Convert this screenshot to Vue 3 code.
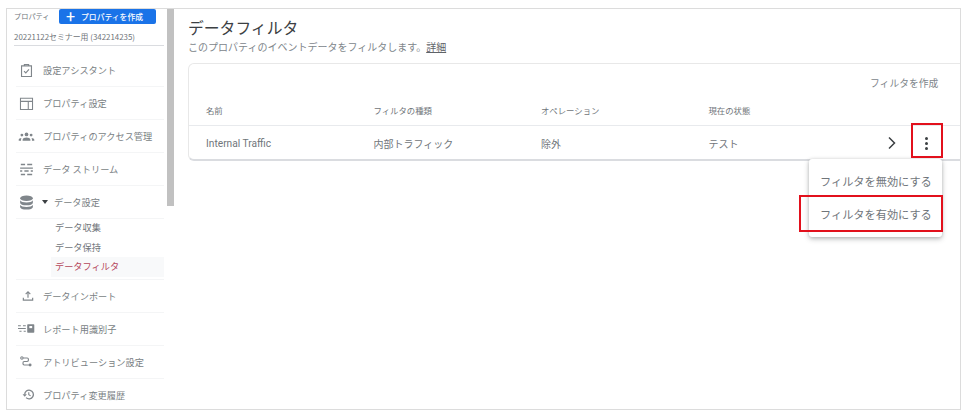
<template>
  <div class="page">
    <div class="frame">
      <aside class="sidebar">
        <div class="prop-head">
          <span class="prop-label">プロパティ</span>
          <button class="create-btn"><span class="plus">+</span>プロパティを作成</button>
        </div>
        <div class="prop-name">20221122セミナー用 (342214235)</div>
        <nav class="nav">
          <div v-for="item in navTop" :key="item.label" class="nav-row">
            <svg class="nav-icon" viewBox="0 0 24 24" v-html="item.icon"></svg>
            <span>{{ item.label }}</span>
          </div>
          <div class="nav-row">
            <svg class="nav-icon db" viewBox="0 0 24 24"><ellipse cx="12" cy="6" rx="9" ry="4" fill="#80868b"/><path d="M3 8.800c1 2 4.500 3.200 9 3.200s8-1.200 9-3.200v3.400c0 2.200-4 3.800-9 3.800s-9-1.600-9-3.800z" fill="#80868b"/><path d="M3 15c1 2 4.500 3.200 9 3.200s8-1.200 9-3.200v3.200c0 2.200-4 3.800-9 3.800s-9-1.600-9-3.800z" fill="#80868b"/></svg>
            <span class="caret"></span>
            <span>データ設定</span>
          </div>
          <div class="sub-list">
            <div class="sub-item">データ収集</div>
            <div class="sub-item">データ保持</div>
            <div class="sub-item active">データフィルタ</div>
          </div>
          <div v-for="item in navBottom" :key="item.label" class="nav-row">
            <svg class="nav-icon" :class="item.cls" viewBox="0 0 24 24" v-html="item.icon"></svg>
            <span>{{ item.label }}</span>
          </div>
        </nav>
      </aside>
      <div class="scrollbar"></div>
      <main class="main">
        <h1 class="title">データフィルタ</h1>
        <p class="desc">このプロパティのイベントデータをフィルタします。<a class="more">詳細</a></p>
        <section class="card">
          <div class="card-top">フィルタを作成</div>
          <div class="table-row head">
            <span v-for="col in columns" :key="col">{{ col }}</span>
          </div>
          <div class="table-row body">
            <span class="latin">Internal Traffic</span>
            <span>内部トラフィック</span>
            <span>除外</span>
            <span>テスト</span>
            <div class="actions">
              <svg class="chevron" viewBox="0 0 10 14"><path d="M2 1.500 7.500 7 2 12.500" fill="none" stroke="#3c4043" stroke-width="1.500"/></svg>
              <div class="kebab"><i></i><i></i><i></i></div>
            </div>
          </div>
        </section>
        <div class="menu">
          <div class="menu-item">フィルタを無効にする</div>
          <div class="menu-item">フィルタを有効にする</div>
        </div>
        <div class="mark mark-kebab"></div>
        <div class="mark mark-item"></div>
      </main>
    </div>
  </div>
</template>

<script setup>
const navTop = [
  { label: '設定アシスタント', icon: '<path d="M5 5.500h14v15H5z M9 5.500V3.500h6v2" fill="none" stroke="#80868b" stroke-width="1.600"/><path d="m8.500 13 2.500 2.500 4.500-5" fill="none" stroke="#80868b" stroke-width="1.600"/>' },
  { label: 'プロパティ設定', icon: '<path d="M3.500 4.500h17v16h-17z M3.500 9h17 M14.500 9v11.500" fill="none" stroke="#80868b" stroke-width="1.500"/>' },
  { label: 'プロパティのアクセス管理', icon: '<circle cx="12" cy="9" r="2.600" fill="#80868b"/><circle cx="5.500" cy="10" r="2" fill="#80868b"/><circle cx="18.500" cy="10" r="2" fill="#80868b"/><path d="M6.500 18v-1.500c0-2 3-3.200 5.500-3.200s5.500 1.200 5.500 3.200V18zM1 18v-1.500c0-1.500 2-2.500 4-2.500-.5.700-.7 1.500-.7 2.500V18zM23 18v-1.500c0-1.500-2-2.500-4-2.500 .5.700.7 1.500.7 2.500V18z" fill="#80868b"/>' },
  { label: 'データ ストリーム', icon: '<path d="M4 5h6M13 5h7M3 10h18M3 14h3M9 14h6M18 14h3M4 19h6M13 19h7" fill="none" stroke="#80868b" stroke-width="2"/>' }
]

const navBottom = [
  { label: 'データインポート', cls: 'up', icon: '<path d="M12 16V6M8 9.500 12 5.500l4 4M4 16v4h16v-4" fill="none" stroke="#80868b" stroke-width="2"/>' },
  { label: 'レポート用識別子', icon: '<rect x="13" y="6" width="10" height="12" rx="1" fill="#80868b"/><rect x="16" y="8.500" width="4" height="3" fill="#fff"/><path d="M0 8h4M7 8h4M0 12h11M2 16h3M8 16h3" stroke="#80868b" stroke-width="1.500"/>' },
  { label: 'アトリビューション設定', cls: 'attr', icon: '<circle cx="5" cy="6" r="2" fill="none" stroke="#80868b" stroke-width="1.800"/><circle cx="19" cy="18" r="2.500" fill="#80868b"/><path d="M7 6h7c3 0 3 6 0 6H9c-3 0-3 6 0 6h8" fill="none" stroke="#80868b" stroke-width="2"/>' },
  { label: 'プロパティ変更履歴', cls: 'hist', icon: '<path d="M5 12a8 8 0 1 1 2.500 5.800" fill="none" stroke="#80868b" stroke-width="2.400"/><path d="M1 11.500h8L5 16z" fill="#80868b"/><path d="M12.500 8v4.500l3.500 2" fill="none" stroke="#80868b" stroke-width="2"/>' }
]

const columns = ['名前', 'フィルタの種類', 'オペレーション', '現在の状態']
</script>

<style>
html, body {
  margin: 0;
  background: #fff;
}
</style>

<style scoped>
.page {
  width: 971px;
  height: 419px;
  overflow: hidden;
  padding: 8px 0 0 6px;
  box-sizing: border-box;
  font-family: "Noto Sans CJK JP", "Roboto", sans-serif;
  color: #70757a;
}

.frame {
  display: flex;
  width: 955px;
  height: 402px;
  box-sizing: border-box;
  border: 1px solid #dcdcdc;
  overflow: hidden;
}

.sidebar {
  width: 160px;
  flex: none;
  box-sizing: border-box;
  padding: 0 3px 0 7px;
}

.prop-head {
  display: flex;
  height: 16px;
}

.prop-label {
  width: 45px;
  flex: none;
  font-size: 7.200px;
  line-height: 15px;
  white-space: nowrap;
}

.create-btn {
  width: 97px;
  height: 15px;
  flex: none;
  border: none;
  border-radius: 2px;
  background: #1a73e8;
  color: #fff;
  font-family: inherit;
  font-size: 7.800px;
  font-weight: 500;
  padding: 0 0 0 7px;
  display: flex;
  align-items: center;
  white-space: nowrap;
}

.plus {
  font-family: "Roboto", sans-serif;
  font-size: 16px;
  font-weight: 400;
  line-height: 15px;
  margin-right: 6px;
}

.prop-name {
  height: 21px;
  box-sizing: border-box;
  padding-top: 4px;
  border-bottom: 1px solid #dadce0;
  font-size: 7.900px;
  line-height: 16px;
  white-space: nowrap;
}

.nav {
  padding-top: 8px;
}

.nav-row {
  display: flex;
  align-items: center;
  height: 32px;
  margin-left: 2px;
  border-bottom: 1px solid #f4f5f6;
  font-size: 9.200px;
  color: #7a7f84;
  white-space: nowrap;
}

.nav-icon {
  width: 17px;
  height: 17px;
  flex: none;
  margin: 0 8px 0 2px;
}

.nav-icon.db {
  margin-right: 7px;
}

.nav-icon.up {
  width: 14px;
  margin: 0 8px 0 5px;
}

.nav-icon.attr {
  width: 14px;
  margin: 0 10px 0 3px;
}

.nav-icon.hist {
  width: 13px;
  margin: 0 8px 0 6px;
}

.caret {
  width: 0;
  height: 0;
  border-left: 3.500px solid transparent;
  border-right: 3.500px solid transparent;
  border-top: 4px solid #3c4043;
  margin-right: 6px;
}

.sub-list {
  padding: 0 0 2px 35px;
  margin: -1px 0 0 2px;
  border-bottom: 1px solid #f4f5f6;
}

.sub-item {
  height: 19.500px;
  line-height: 19.500px;
  padding-left: 4px;
  font-size: 9.200px;
}

.sub-item.active {
  background: #f8f9fa;
  color: #b5475a;
}

.scrollbar {
  width: 7px;
  height: 197px;
  flex: none;
  background: #c1c1c1;
}

.main {
  position: relative;
  flex: 1;
  min-width: 0;
  padding: 8px 0 0 14px;
}

.title {
  margin: 0;
  font-size: 15.800px;
  font-weight: 400;
  line-height: 22px;
  color: #3c4043;
}

.desc {
  margin: 0;
  font-size: 10px;
  line-height: 15px;
  color: #80868b;
}

.more {
  color: #5f6368;
  text-decoration: underline;
}

.card {
  width: 790px;
  height: 98px;
  margin-top: 9px;
  box-sizing: border-box;
  border: 1px solid #e8e8e8;
  border-bottom: 2px solid #dadce0;
  border-radius: 6px;
}

.card-top {
  height: 40px;
  padding: 12px 0 0 681px;
  box-sizing: border-box;
  font-size: 9.800px;
  line-height: 15px;
  color: #80868b;
  white-space: nowrap;
}

.table-row {
  display: grid;
  grid-template-columns: 167.500px 167.500px 167.500px 1fr;
  align-items: center;
  padding-left: 17px;
}

.table-row.head {
  height: 21px;
  font-size: 8.400px;
  line-height: 13px;
  border-bottom: 1px solid #e8eaed;
  align-items: start;
}

.table-row.body {
  position: relative;
  height: 34px;
  font-size: 10px;
  box-sizing: border-box;
}

.latin {
  font-family: "Roboto", sans-serif;
  font-size: 10.200px;
}

.actions {
  position: absolute;
  left: 698px;
  top: 0;
  height: 100%;
  display: flex;
  align-items: center;
}

.chevron {
  width: 10px;
  height: 14px;
}

.kebab {
  display: flex;
  flex-direction: column;
  gap: 2px;
  margin-left: 28px;
}

.kebab i {
  display: block;
  width: 3px;
  height: 3px;
  border-radius: 50%;
  background: #3c4043;
}

.menu {
  position: absolute;
  left: 635px;
  top: 150px;
  width: 133px;
  height: 78px;
  padding-top: 6px;
  box-sizing: border-box;
  background: #fff;
  border-radius: 3px;
  box-shadow: 0 2px 5px rgba(60, 64, 67, 0.35), 0 0 3px rgba(60, 64, 67, 0.15);
}

.menu-item {
  height: 33px;
  line-height: 33px;
  padding-left: 11px;
  font-size: 11.200px;
  white-space: nowrap;
}

.mark {
  position: absolute;
  box-sizing: border-box;
  border: 2px solid #e2101c;
}

.mark-kebab {
  left: 737px;
  top: 114px;
  width: 32px;
  height: 35px;
}

.mark-item {
  left: 625px;
  top: 186px;
  width: 144px;
  height: 37px;
}
</style>
